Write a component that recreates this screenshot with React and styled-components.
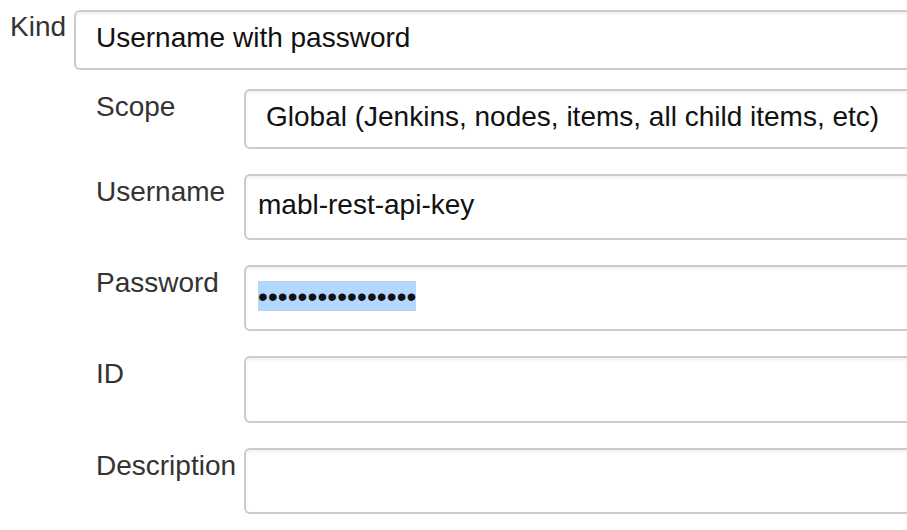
import React from 'react';
import styled, {createGlobalStyle} from 'styled-components';

const Global = createGlobalStyle`
  html, body {
    margin: 0;
    background: #fff;
    overflow: hidden;
  }
  body {
    font-family: "Liberation Sans", Arial, sans-serif;
  }
`;

const Page = styled.div`
  box-sizing: border-box;
  width: 100%;
  padding: 10px 0 0 10px;
  overflow: hidden;
`;

const Row = styled.div`
  display: grid;
  grid-template-columns: ${p => p.$labelWidth}px minmax(0, 1fr);
  align-items: start;
`;

const Label = styled.div`
  font-size: 28px;
  line-height: 32px;
  color: #333;
  padding-top: ${p => p.$top || 2}px;
  white-space: nowrap;
`;

const Field = styled.div`
  box-sizing: border-box;
  height: ${p => p.$height}px;
  display: flex;
  align-items: center;
  padding: 0 0 4px ${p => p.$pad}px;
  border: 2px solid #ccc;
  border-right: none;
  border-radius: 6px 0 0 6px;
  background: #fff;
  box-shadow: inset 0 2px 3px rgba(0, 0, 0, 0.06);
  font-size: 28px;
  line-height: 32px;
  color: #111;
  white-space: nowrap;
  overflow: hidden;
`;

const Nested = styled.div`
  display: flex;
  flex-direction: column;
  gap: 25px;
  margin-top: 19px;
  padding-left: 86px;
`;

const Selected = styled.span`
  background: #b3d7fe;
  line-height: 29px;
  padding-top: 1px;
  letter-spacing: 0.1px;
`;

const rows = [
  {label: 'Scope', value: 'Global (Jenkins, nodes, items, all child items, etc)', height: 60, pad: 20},
  {label: 'Username', value: 'mabl-rest-api-key', height: 66, pad: 12},
  {label: 'Password', secret: 16, height: 66, pad: 12},
  {label: 'ID', value: '', height: 67, pad: 12},
  {label: 'Description', value: '', height: 66, pad: 12},
];

export default function App() {
  return (
    <Page>
      <Global />
      <Row $labelWidth={64}>
        <Label $top={1}>Kind</Label>
        <Field $height={60} $pad={20}>Username with password</Field>
      </Row>
      <Nested>
        {rows.map(r => (
          <Row key={r.label} $labelWidth={148}>
            <Label>{r.label}</Label>
            <Field $height={r.height} $pad={r.pad}>
              {r.secret ? <Selected>{'\u2022'.repeat(r.secret)}</Selected> : r.value}
            </Field>
          </Row>
        ))}
      </Nested>
    </Page>
  );
}
